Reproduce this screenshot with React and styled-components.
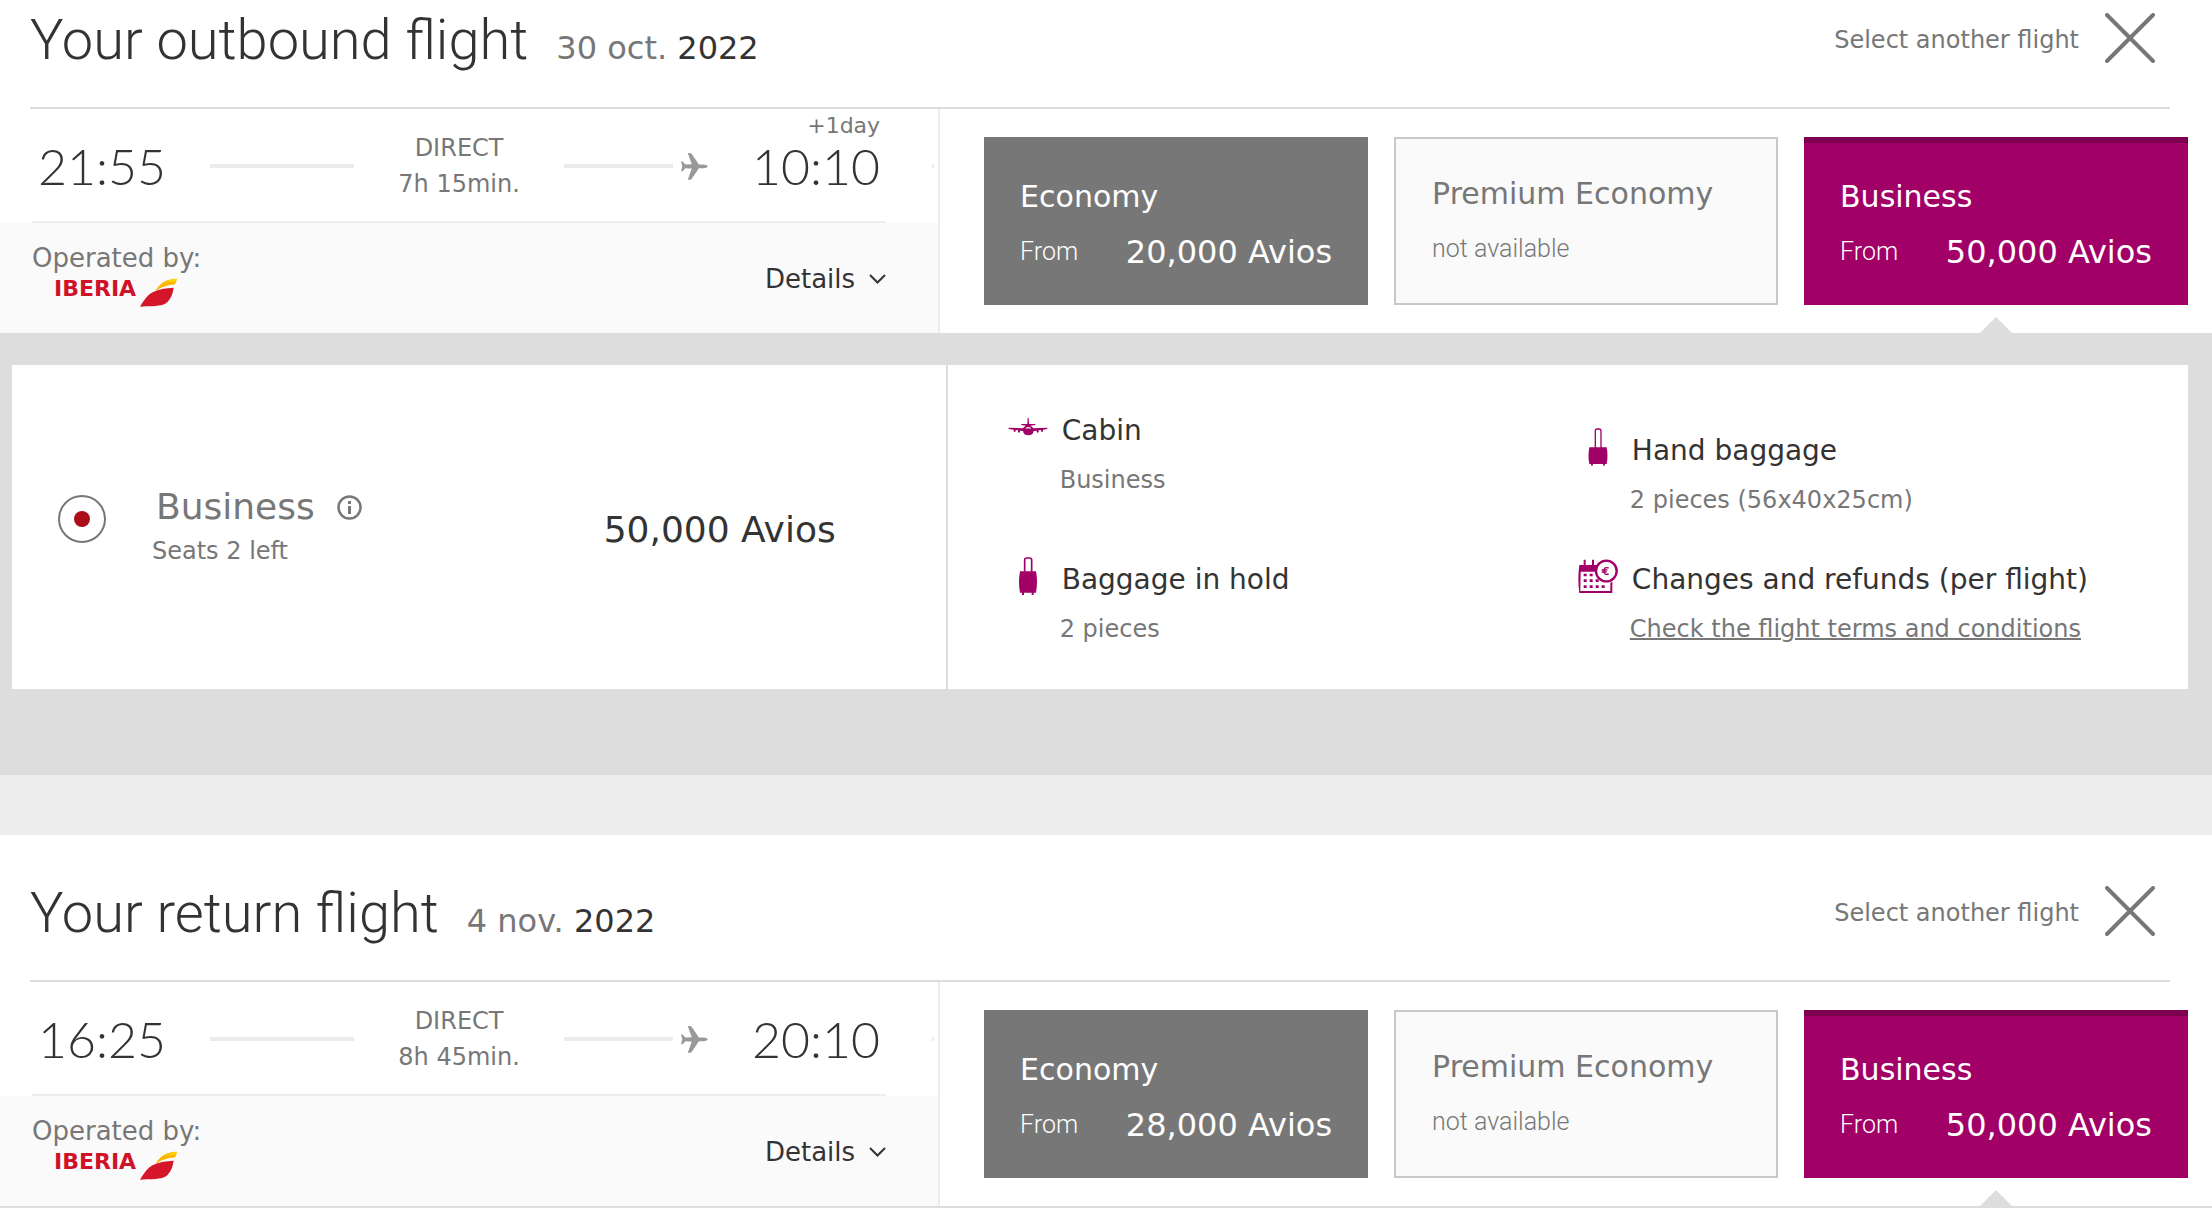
import React, { useState } from 'react';
import styled, { createGlobalStyle, css } from 'styled-components';

const GlobalStyle = createGlobalStyle`
  * {
    box-sizing: border-box;
  }
  body {
    margin: 0;
    background: #fff;
    color: #333;
    font-family: "DejaVu Sans", Verdana, sans-serif;
    font-size: 24px;
  }
  button {
    font: inherit;
    color: inherit;
    background: none;
    border: none;
    padding: 0;
    text-align: left;
    cursor: pointer;
  }
`;

const headFont = css`
  font-family: Roboto, sans-serif;
  font-weight: 300;
`;

const Section = styled.section`
  padding-top: ${props => (props.$first ? 0 : 38)}px;
  border-bottom: ${props => (props.$open ? 'none' : '2px solid #ddd')};
`;

const Header = styled.header`
  display: flex;
  justify-content: space-between;
  align-items: flex-start;
  margin: 0 42px 0 30px;
  padding-bottom: 27px;
  border-bottom: 2px solid #ddd;
`;

const Heading = styled.div`
  display: flex;
  align-items: baseline;
  gap: 28px;
`;

const Title = styled.h2`
  ${headFont}
  margin: 0;
  font-size: 56px;
  line-height: 80px;
`;

const FlightDate = styled.span`
  font-size: 32px;
  color: #777;
`;

const Year = styled.span`
  color: #333;
`;

const AnotherButton = styled.button`
  display: flex;
  align-items: center;
  gap: 26px;
  height: 76px;
  padding-right: 15px;
  color: #777;
`;

const AnotherLabel = styled.span`
  padding-top: 4px;
`;

const Body = styled.div`
  display: flex;
`;

const Leg = styled.div`
  flex: 0 0 42.5%;
  display: flex;
  flex-direction: column;
  border-right: 2px solid #ededed;
`;

const RouteRow = styled.div`
  display: flex;
  align-items: center;
  padding: 0 4px 0 32px;
`;

const Route = styled.div`
  flex: 1;
  display: flex;
  align-items: center;
  gap: 44px;
  height: 114px;
  padding: 2px 6px 0 6px;
  border-bottom: 2px solid #ededed;
`;

const Tick = styled.span`
  width: 2px;
  height: 4px;
  margin-left: 46px;
  background: #ebebeb;
`;

const Time = styled.div`
  position: relative;
  font-family: Lato, sans-serif;
  font-weight: 300;
  font-size: 50px;
  line-height: 50px;
`;

const NextDay = styled.span`
  position: absolute;
  right: 0;
  bottom: 100%;
  padding-bottom: 4px;
  font-family: "DejaVu Sans", Verdana, sans-serif;
  font-weight: 400;
  font-size: 22px;
  line-height: 22px;
  color: #777;
`;

const Dash = styled.div`
  flex: 1;
  display: flex;
  align-items: center;
  gap: 8px;
  &::before {
    content: '';
    flex: 1;
    height: 4px;
    background: #ebebeb;
  }
`;

const Stops = styled.div`
  line-height: 36px;
  text-align: center;
  color: #777;
`;

const LegFooter = styled.div`
  flex: 1;
  display: flex;
  justify-content: space-between;
  align-items: center;
  padding: 0 52px 0 32px;
  background: #fafafa;
  font-size: 26px;
`;

const Operator = styled.div`
  padding-bottom: 8px;
  line-height: 32px;
  color: #777;
`;

const Brand = styled.div`
  display: flex;
  align-items: flex-start;
  gap: 4px;
  height: 28px;
  margin: 4px 0 0 22px;
  font-size: 22px;
  font-weight: 700;
  line-height: 22px;
  color: #d01228;
`;

const DetailsButton = styled.button`
  display: flex;
  align-items: center;
  gap: 14px;
  padding-top: 2px;
`;

const Cabins = styled.div`
  flex: 1;
  display: grid;
  grid-template-columns: repeat(3, 1fr);
  gap: 26px;
  padding: 28px 24px 28px 44px;
`;

const CabinCard = styled.button`
  position: relative;
  display: flex;
  flex-direction: column;
  justify-content: center;
  gap: 15px;
  height: 168px;
  padding: 0 36px;
  font-size: 30px;
  line-height: 40px;
  color: #fff;
  background: #777;
  border-top: 6px solid #777;

  &:disabled {
    color: #777;
    background: #fafafa;
    border: 2px solid #c8c8c8;
    cursor: default;
  }

  ${props => props.$selected && css`
    background: #a10067;
    border-top-color: #7d0050;
    &::after {
      content: '';
      position: absolute;
      left: 50%;
      bottom: -28px;
      margin-left: -16px;
      border: 16px solid transparent;
      border-top: none;
      border-bottom-color: #ddd;
    }
  `}
`;

const CardRow = styled.span`
  display: flex;
  justify-content: space-between;
  align-items: center;
  align-self: stretch;
`;

const CardNote = styled.span`
  ${headFont}
  font-size: 25px;
`;

const CardPrice = styled.span`
  font-size: 32px;
`;

const FarePanel = styled.div`
  padding: 32px 24px 86px 12px;
  background: #ddd;
`;

const Fare = styled.div`
  display: flex;
  background: #fff;
`;

const FareOption = styled.div`
  flex: 0 0 43%;
  display: flex;
  align-items: center;
  padding: 0 110px 0 46px;
  border-right: 2px solid #ddd;
`;

const Radio = styled.input`
  appearance: none;
  display: grid;
  place-items: center;
  width: 48px;
  height: 48px;
  margin: 0 46px 16px 0;
  border: 2px solid #777;
  border-radius: 50%;
  &:checked::before {
    content: '';
    width: 16px;
    height: 16px;
    border-radius: 50%;
    background: #ab0e1a;
  }
`;

const FareText = styled.div`
  flex: 1;
  color: #777;
`;

const FareName = styled.div`
  display: flex;
  align-items: center;
  gap: 22px;
  padding-left: 4px;
  font-size: 36px;
  line-height: 48px;
`;

const InfoButton = styled.button`
  display: flex;
`;

const Seats = styled.div`
  line-height: 40px;
`;

const FarePrice = styled.div`
  padding-top: 4px;
  font-size: 36px;
`;

const Features = styled.div`
  flex: 1;
  display: grid;
  grid-template-columns: 1fr 1fr;
  padding: 42px 40px 35px 60px;
`;

const FeatureColumn = styled.div`
  display: flex;
  flex-direction: column;
  justify-content: flex-end;
  gap: ${props => props.$gap}px;
`;

const Feature = styled.div`
  display: flex;
  gap: 12px;
`;

const FeatureIcon = styled.div`
  display: flex;
  align-items: center;
  justify-content: center;
  flex: 0 0 40px;
  height: 40px;
`;

const FeatureName = styled.div`
  padding-left: 2px;
  font-size: 28px;
  line-height: 48px;
`;

const FeatureNote = styled.div`
  line-height: 50px;
  color: #777;
`;

const TermsLink = styled.a`
  color: inherit;
  text-decoration: underline;
  text-decoration-thickness: 2px;
`;

const Spacer = styled.div`
  height: 60px;
  background: #ededed;
`;

const CloseIcon = () => (
  <svg width="50" height="50" viewBox="0 0 50 50" fill="none" stroke="#777" strokeWidth="4" strokeLinecap="round">
    <path d="M2 2L48 48M48 2L2 48" />
  </svg>
)

const PlaneIcon = () => (
  <svg width="27" height="27" viewBox="0 0 80 80" fill="#999">
    <path d="M20 0h8q4 2 6 6l19 28h15q10 2 12 5q-2 4-12 6H53L34 73q-2 4-6 6h-8l12-33q-10 0-19-1l-8 9H0l4-15L0 25h5l8 9q9-1 19-1z" />
  </svg>
)

const ChevronIcon = () => (
  <svg width="17" height="10" viewBox="0 0 17 10" fill="none" stroke="#333" strokeWidth="2">
    <path d="M1 1l7.500 7.500L16 1" />
  </svg>
)

const SwooshIcon = () => (
  <svg width="37" height="29" viewBox="0 0 110 86">
    <path fill="#fbb400" d="M45 40C58 16 76 3 109 2c0 8-2 12-6 17C82 20 62 26 45 40z" />
    <path fill="#ffd200" d="M68 17C80 7 92 3 109 2c0 6-2 8-6 10C88 11 78 12 68 17z" />
    <path fill="#d4152a" d="M0 85C14 62 24 50 36 43C54 34 76 30 100 29c-3 23-12 42-30 50C52 85 25 84 0 85z" />
  </svg>
)

const InfoIcon = () => (
  <svg width="25" height="25" viewBox="0 0 25 25" fill="none" stroke="#777" strokeWidth="3">
    <circle cx="12.500" cy="12.500" r="11" strokeWidth="2.500" />
    <path d="M12.500 11v8M12.500 6v3" />
  </svg>
)

const CabinIcon = () => (
  <svg width="40" height="20" viewBox="23 22 120 58" fill="#a10067">
    <path d="M82 24h3l1 18h18l2 3-16 2q7 3 9 8l42-2v4l-13 2v5q-3 4-6 0v-4l-7 1v5q-3 4-6 0v-4l-9 1q-2 13-16 13T68 63l-9-1v4q-3 4-6 0v-5l-7-1v4q-3 4-6 0v-5l-15-2v-4l43 2q2-5 9-8l-15-2 2-3h17z" />
    <path d="M75 56q1-5 9-5t9 5q-9-2-18 0z" fill="#fff" />
  </svg>
)

const HoldBagIcon = () => (
  <svg width="20" height="38" viewBox="0 0 60 114" fill="#a10067">
    <path d="M20 44V9q0-6 6-6h9q6 0 6 6v35" fill="none" stroke="#a10067" strokeWidth="5" />
    <path d="M6 43h48q6 32 0 64h-7v7h-6v-7H18v7h-6v-7H6q-6-32 0-64z" />
  </svg>
)

const HandBagIcon = () => (
  <svg width="20" height="38" viewBox="0 0 60 114" fill="#a10067">
    <path d="M22 60V9q0-6 5-6h6q6 0 6 6v51" fill="none" stroke="#a10067" strokeWidth="4" />
    <path d="M4 58h52q5 25 0 50h-5l-1 5h-4l-1-5H15l-1 5h-4l-1-5H4q-5-25 0-50z" />
  </svg>
)

const RefundIcon = () => (
  <svg width="40" height="35" viewBox="0 0 120 105" fill="#a10067">
    <path d="M17 2h6v16h19V2h6v16h14q-5 10-2 20H8l-1 58h90V72l6-5v35H4q-6-42 0-84h13z" />
    <path d="M17 44h9v8h-9zM35 44h9v8h-9zM17 61h9v8h-9zM35 61h9v8h-9zM53 61h9v8h-9zM17 79h9v8h-9zM35 79h9v8h-9zM53 79h9v8h-9zM71 79h9v8h-9z" />
    <circle cx="85" cy="36" r="31" fill="#fff" stroke="#a10067" strokeWidth="7" />
    <path d="M92 27q-14-5-14 9t14 9M71 33h17M71 39h15" fill="none" stroke="#a10067" strokeWidth="4" />
  </svg>
)

const flights = [
  {
    title: 'Your outbound flight',
    day: '30 oct.',
    year: '2022',
    departure: '21:55',
    arrival: '10:10',
    nextDay: '+1day',
    duration: '7h 15min.',
    open: true,
    cabins: [
      { name: 'Economy', price: '20,000 Avios' },
      { name: 'Premium Economy' },
      { name: 'Business', price: '50,000 Avios' },
    ],
  },
  {
    title: 'Your return flight',
    day: '4 nov.',
    year: '2022',
    departure: '16:25',
    arrival: '20:10',
    duration: '8h 45min.',
    cabins: [
      { name: 'Economy', price: '28,000 Avios' },
      { name: 'Premium Economy' },
      { name: 'Business', price: '50,000 Avios' },
    ],
  },
];

const Cabin = ({ name, price, selected, onSelect }) => (
  <CabinCard type="button" disabled={!price} $selected={selected} aria-pressed={selected} onClick={onSelect}>
    <span>{name}</span>
    <CardRow>
      <CardNote>{price ? 'From' : 'not available'}</CardNote>
      {price && <CardPrice>{price}</CardPrice>}
    </CardRow>
  </CabinCard>
)

const FeatureItem = ({ icon, name, children }) => (
  <Feature>
    <FeatureIcon>{icon}</FeatureIcon>
    <div>
      <FeatureName>{name}</FeatureName>
      <FeatureNote>{children}</FeatureNote>
    </div>
  </Feature>
)

const FareDetails = () => (
  <FarePanel>
    <Fare>
      <FareOption>
        <Radio type="radio" id="fare-business" name="fare" defaultChecked />
        <FareText>
          <FareName>
            <label htmlFor="fare-business">Business</label>
            <InfoButton type="button" aria-label="Fare information"><InfoIcon /></InfoButton>
          </FareName>
          <Seats>Seats 2 left</Seats>
        </FareText>
        <FarePrice>50,000 Avios</FarePrice>
      </FareOption>
      <Features>
        <FeatureColumn $gap={51}>
          <FeatureItem icon={<CabinIcon />} name="Cabin">Business</FeatureItem>
          <FeatureItem icon={<HoldBagIcon />} name="Baggage in hold">2 pieces</FeatureItem>
        </FeatureColumn>
        <FeatureColumn $gap={31}>
          <FeatureItem icon={<HandBagIcon />} name="Hand baggage">2 pieces (56x40x25cm)</FeatureItem>
          <FeatureItem icon={<RefundIcon />} name="Changes and refunds (per flight)">
            <TermsLink href="#terms">Check the flight terms and conditions</TermsLink>
          </FeatureItem>
        </FeatureColumn>
      </Features>
    </Fare>
  </FarePanel>
)

const Flight = ({ flight, first }) => {
  const [cabin, setCabin] = useState('Business');

  return (
    <Section $first={first} $open={flight.open}>
      <Header>
        <Heading>
          <Title>{flight.title}</Title>
          <FlightDate>{flight.day} <Year>{flight.year}</Year></FlightDate>
        </Heading>
        <AnotherButton type="button">
          <AnotherLabel>Select another flight</AnotherLabel>
          <CloseIcon />
        </AnotherButton>
      </Header>
      <Body>
        <Leg>
          <RouteRow>
            <Route>
              <Time>{flight.departure}</Time>
              <Dash />
              <Stops>
                <div>DIRECT</div>
                <div>{flight.duration}</div>
              </Stops>
              <Dash><PlaneIcon /></Dash>
              <Time>
                {flight.nextDay && <NextDay>{flight.nextDay}</NextDay>}
                {flight.arrival}
              </Time>
            </Route>
            <Tick />
          </RouteRow>
          <LegFooter>
            <Operator>
              Operated by:
              <Brand>IBERIA<SwooshIcon /></Brand>
            </Operator>
            <DetailsButton type="button">
              Details
              <ChevronIcon />
            </DetailsButton>
          </LegFooter>
        </Leg>
        <Cabins>
          {flight.cabins.map(c => (
            <Cabin key={c.name} {...c} selected={c.name === cabin} onSelect={() => setCabin(c.name)} />
          ))}
        </Cabins>
      </Body>
      {flight.open && <FareDetails />}
    </Section>
  )
}

const App = () => (
  <>
    <GlobalStyle />
    <Flight flight={flights[0]} first />
    <Spacer />
    <Flight flight={flights[1]} />
  </>
)

export default App;
